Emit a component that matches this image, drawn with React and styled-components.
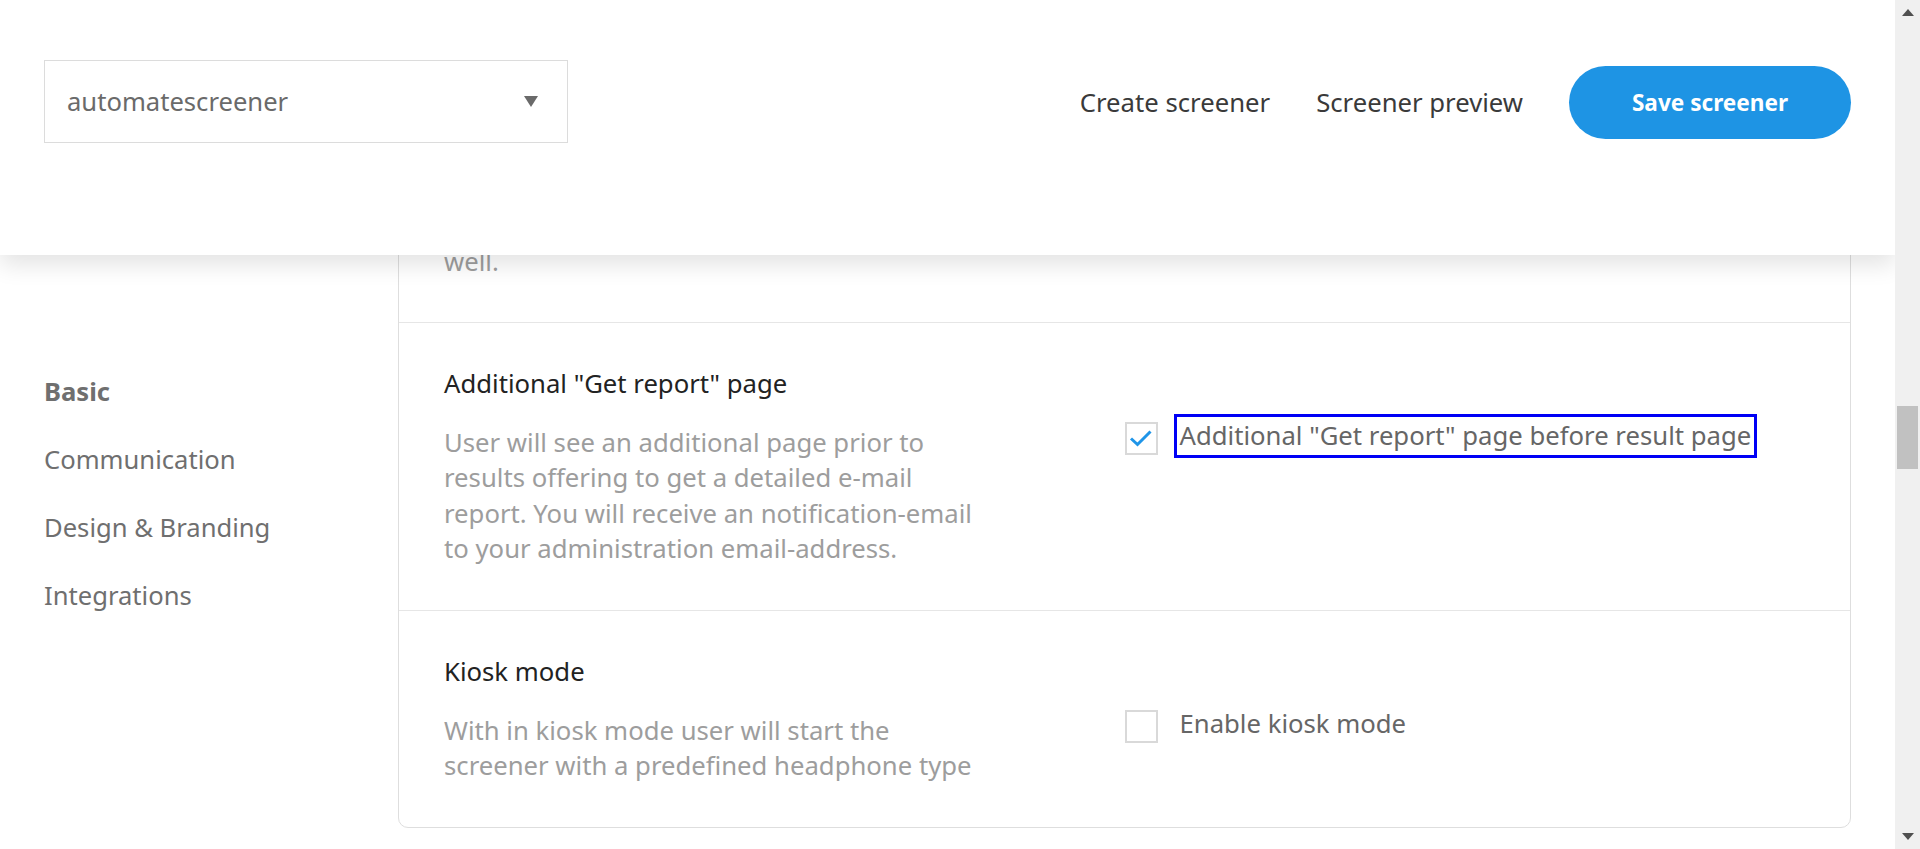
import React from "react";
import styled, { createGlobalStyle } from "styled-components";

const GlobalStyle = createGlobalStyle`
html, body {
  margin:0;
  padding:0;
  overflow:hidden;
  background:#fff;
  font-family:"Noto Sans", "Open Sans", sans-serif;
}
`

const Page = styled.div`
display:flex;
height:849px;
width:1920px;
overflow:hidden;
`
const Main = styled.div`
flex:1;
display:flex;
flex-direction:column;
overflow:hidden;
`
const Header = styled.header`
position:relative;
z-index:2;
height:255px;
flex-shrink:0;
box-sizing:border-box;
padding:61px 44px 0 44px;
background:#fff;
box-shadow:0 10px 22px rgba(0,0,0,0.11);
display:flex;
align-items:flex-start;
justify-content:space-between;
`
const Select = styled.div`
width:524px;
height:83px;
margin-top:-1px;
box-sizing:border-box;
border:1px solid #dcdcdc;
display:flex;
align-items:center;
justify-content:space-between;
padding:0 29px 0 22px;
font-size:25.6px;
color:#6a6a6a;
`
const Caret = styled.span`
width:0;
height:0;
border-left:7px solid transparent;
border-right:7px solid transparent;
border-top:11px solid #6a6a6a;
`
const Nav = styled.nav`
display:flex;
align-items:center;
height:83px;
gap:46px;
`
const NavLink = styled.a`
font-size:25.7px;
color:#3a3a3a;
text-decoration:none;
cursor:pointer;
`
const SaveButton = styled.button`
width:282px;
height:73px;
border:none;
border-radius:37px;
background:#1e94e4;
color:#fff;
font-family:inherit;
font-weight:700;
font-size:22.6px;
cursor:pointer;
`
const Body = styled.div`
display:flex;
margin-top:-55px;
flex:1;
`
const Sidebar = styled.aside`
width:398px;
flex-shrink:0;
box-sizing:border-box;
padding:158px 0 0 44px;
display:flex;
flex-direction:column;
`
const SideItem = styled.a`
display:block;
line-height:68px;
font-size:25.6px;
color:#6f6f6f;
font-weight:${p => (p.active ? 700 : 400)};
cursor:pointer;
`
const Card = styled.div`
width:1453px;
box-sizing:border-box;
border:1px solid #dedede;
border-radius:0 0 10px 10px;
background:#fff;
align-self:flex-start;
`
const Section = styled.section`
padding:${p => (p.tail ? "43px 45px 42px" : "43px 45px 43px")};
border-top:${p => (p.first ? "none" : "1px solid #e6e6e6")};
`
const Title = styled.h3`
margin:0 0 23px 0;
font-weight:400;
font-size:25.7px;
line-height:36px;
color:#222;
`
const Row = styled.div`
display:grid;
grid-template-columns:1fr 1fr;
`
const Desc = styled.p`
margin:0;
max-width:552px;
font-size:25.7px;
line-height:35.5px;
color:#9d9d9d;
`
const Option = styled.label`
display:flex;
align-items:center;
gap:20px;
height:33px;
margin-top:-3px;
font-size:25.7px;
color:#666;
cursor:pointer;
`
const Box = styled.span`
width:33px;
height:33px;
box-sizing:border-box;
border:2px solid #d9d9d9;
display:flex;
align-items:center;
justify-content:center;
flex-shrink:0;
`
const OptionText = styled.span`
padding:0 2px;
margin-top:-4px;
outline:${p => (p.focused ? "3px solid #0000f5" : "none")};
outline-offset:1px;
line-height:36px;
`
const ScrollTrack = styled.div`
width:25px;
flex-shrink:0;
background:#f0f0f0;
display:flex;
flex-direction:column;
align-items:center;
`
const Arrow = styled.div`
height:25px;
width:100%;
display:flex;
align-items:center;
justify-content:center;
`
const Thumb = styled.div`
margin-top:381px;
width:21px;
height:63px;
background:#c1c1c1;
`
const Spacer = styled.div`
flex:1;
`

const Check = () => (
  <svg width="24" height="20" viewBox="0 0 24 20">
    <path d="M2 10.5 L8.5 16.5 L21.5 3.5" fill="none" stroke="#1f95e8" strokeWidth="3" />
  </svg>
)

const Triangle = ({ down }) => (
  <svg width="12" height="7" viewBox="0 0 12 7">
    <path d={down ? "M0 0 H12 L6 7 Z" : "M0 7 H12 L6 0 Z"} fill="#505050" />
  </svg>
)

const App = () => {
  return (
    <Page>
      <GlobalStyle />
      <Main>
        <Header>
          <Select>
            <span>automatescreener</span>
            <Caret />
          </Select>
          <Nav>
            <NavLink>Create screener</NavLink>
            <NavLink>Screener preview</NavLink>
            <SaveButton>Save screener</SaveButton>
          </Nav>
        </Header>
        <Body>
          <Sidebar>
            <SideItem active>Basic</SideItem>
            <SideItem>Communication</SideItem>
            <SideItem>Design &amp; Branding</SideItem>
            <SideItem>Integrations</SideItem>
          </Sidebar>
          <Card>
            <Section first tail>
              <Desc>well.</Desc>
            </Section>
            <Section>
              <Title>Additional "Get report" page</Title>
              <Row>
                <Desc>
                  User will see an additional page prior to results offering to get a detailed e-mail report. You will receive an notification-email to your administration email-address.
                </Desc>
                <Option>
                  <Box><Check /></Box>
                  <OptionText focused>Additional "Get report" page before result page</OptionText>
                </Option>
              </Row>
            </Section>
            <Section>
              <Title>Kiosk mode</Title>
              <Row>
                <Desc>With in kiosk mode user will start the screener with a predefined headphone type</Desc>
                <Option>
                  <Box />
                  <OptionText>Enable kiosk mode</OptionText>
                </Option>
              </Row>
            </Section>
          </Card>
        </Body>
      </Main>
      <ScrollTrack>
        <Arrow><Triangle /></Arrow>
        <Thumb />
        <Spacer />
        <Arrow><Triangle down /></Arrow>
      </ScrollTrack>
    </Page>
  )
}
export default App;
